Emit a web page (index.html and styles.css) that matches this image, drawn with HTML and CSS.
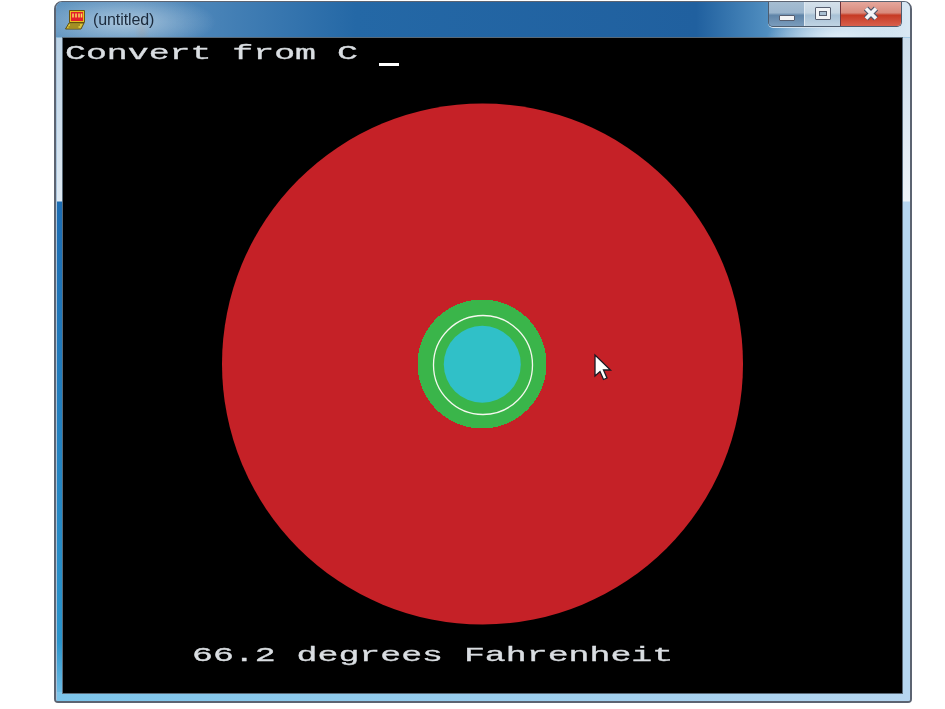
FILE: index.html
```html
<!DOCTYPE html>
<html lang="en">
<head>
<meta charset="utf-8">
<title>(untitled)</title>
<link rel="stylesheet" href="styles.css">
</head>
<body>
<main class="window">
  <div class="frame">
    <header class="titlebar">
      <svg class="app-icon" width="21" height="20" viewBox="0 0 21 20">
        <path d="M4.500.5h15v12h-15z" fill="#e8c020" stroke="#6a5410"/>
        <path d="M6 2h12v9H6z" fill="#e4202a"/>
        <path d="M8 3.500v4M11 3.500v4M14 3.500v4M16.500 3.500v4" stroke="#f8e060" stroke-width="1.500"/>
        <path d="M4 13h15l-3 6H.5z" fill="#dcc438" stroke="#5a4a10"/>
        <path d="M5 15h10M3.500 17h10" stroke="#6a5a10"/>
      </svg>
      <span class="title">(untitled)</span>
      <div class="controls">
        <div class="ctl ctl-min"><span class="min-glyph"></span></div>
        <div class="ctl ctl-max"><span class="max-glyph"></span></div>
        <div class="ctl ctl-close">
          <svg width="18" height="15" viewBox="0 0 18 15"><path d="M4 2.500l10 10M14 2.500l-10 10" stroke="#4c5468" stroke-width="6"/><path d="M4 2.500l10 10M14 2.500l-10 10" stroke="#f4f5f7" stroke-width="3.600"/></svg>
        </div>
      </div>
    </header>
    <section class="client">
      <svg class="scene" width="840" height="656" viewBox="0 0 840 656">
        <circle cx="419.500" cy="326" r="260.500" fill="#c52127"/>
        <circle cx="419" cy="326" r="64.500" fill="#3ab54a" shape-rendering="crispEdges"/>
        <circle cx="420" cy="327" r="49.500" fill="none" stroke="#f4f8ee" stroke-width="1.300"/>
        <circle cx="419.300" cy="326.300" r="38.500" fill="#30c0c8"/>
        <path d="M532 317v21l5-4.500 3.500 8 3.500-1.500-3.500-8h7z" fill="#fff" stroke="#1a1a24" stroke-width="1.300"/>
      </svg>
      <div class="line line-top">
        <span class="text">Convert from C</span>
        <span class="cursor"></span>
      </div>
      <div class="line line-bottom">
        <span class="text">66.2 degrees Fahrenheit</span>
      </div>
    </section>
  </div>
</main>
</body>
</html>
```
FILE: styles.css
```css
html, body {
  margin: 0;
  height: 100%;
  background: #fff;
  overflow: hidden;
}
body {
  padding: 1px 33px 6px 54px;
  box-sizing: border-box;
  height: 709px;
}
.window {
  height: 100%;
  box-sizing: border-box;
  border: 2px solid #5c6472;
  border-top-width: 1px;
  border-radius: 8px 8px 4px 4px;
  overflow: hidden;
  background: linear-gradient(to bottom, #b4cde2 0, #dfeaf3 199px, #1c6cb2 200px, #2a94cc 640px, #7cc4ea 702px);
}
.frame {
  height: 100%;
  display: flex;
  flex-direction: column;
  background:
    linear-gradient(to right, #7cc4ea, #b6d6f0) bottom / 100% 9px no-repeat,
    linear-gradient(to bottom, #c4d8e8 0, #eef4f9 199px, #b6d6f0 200px) right / 9px 100% no-repeat;
  box-shadow: inset 1px 0 #a9c3db;
}
.titlebar {
  height: 36px;
  flex: none;
  display: flex;
  align-items: flex-start;
  background:
    radial-gradient(ellipse 90px 28px at 70px 20px, rgba(205,222,235,.7), transparent),
    radial-gradient(ellipse 8px 18px at 86px 28px, rgba(120,120,125,.45), transparent),
    radial-gradient(ellipse 70px 30px at 780px 38px, rgba(230,242,250,.95), transparent),
    linear-gradient(to right, #5f93bf 0, #4a84b8 150px, #2468a6 300px, #20609f 640px, #4f8dbf 710px, #b6d2e8 790px, #d9e8f3 852px);
  box-sizing: border-box;
  border-bottom: 1px solid rgba(150,195,225,.8);
}
.app-icon {
  margin: 8px 0 0 9px;
}
.title {
  margin: 8px 0 0 7px;
  font: 16px/20px "Liberation Sans", Arial, sans-serif;
  letter-spacing: -.1px;
  color: #1b2a3c;
  filter: blur(.3px);
}
.controls {
  margin: 0 8px 0 auto;
  display: flex;
  height: 25px;
  box-sizing: border-box;
  border: 1px solid #4d5c6e;
  border-top: 0;
  border-radius: 0 0 5px 5px;
  box-shadow: 0 1px 0 #d6e4ef;
  overflow: hidden;
}
.ctl {
  display: flex;
  align-items: center;
  justify-content: center;
  box-sizing: border-box;
  height: 100%;
}
.ctl-min {
  width: 36px;
  border-right: 1px solid #dfe9f1;
  background: linear-gradient(to bottom, #a5bdd2 0, #9ab4cc 45%, #5f84a8 55%, #7a9cbc 100%);
}
.ctl-max {
  width: 36px;
  border-right: 1px solid #70323a;
  background: linear-gradient(to bottom, #d4e0ea 0, #c6d6e3 45%, #a8c1d6 55%, #c0d4e3 100%);
}
.ctl-close {
  width: 60px;
  background: linear-gradient(to bottom, #e6a79c 0, #d88a7c 45%, #c63a24 55%, #d8604c 100%);
}
.min-glyph {
  display: block;
  box-sizing: border-box;
  width: 16px;
  height: 6px;
  margin-top: 7px;
  background: #f2f3f5;
  border: 1px solid #565e70;
  border-radius: 1px;
}
.max-glyph {
  box-sizing: border-box;
  width: 16px;
  height: 13px;
  border: 1px solid #565e70;
  background: #f0f3f6;
  border-radius: 1px;
  margin-bottom: 2px;
  display: flex;
  align-items: center;
  justify-content: center;
}
.max-glyph::after {
  content: "";
  width: 8px;
  height: 5px;
  box-sizing: border-box;
  border: 1px solid #565e70;
  background: #a8bfd2;
}
.ctl-close svg {
  margin-bottom: 1px;
}
.client {
  position: relative;
  flex: 1;
  margin: 0 8px 8px 7px;
  background: #000;
  box-shadow: 0 0 0 1px #5a6a78;
  display: flex;
  flex-direction: column;
  justify-content: space-between;
  overflow: hidden;
}
.scene {
  position: absolute;
  inset: 0;
}
.line {
  position: relative;
  display: flex;
  align-items: flex-end;
  font: 400 21px/24px "Liberation Mono", "Courier New", monospace;
  -webkit-text-stroke: .35px #dadee2;
  color: #dadee2;
  white-space: pre;
}
.line-top {
  padding: 4px 0 0 2px;
}
.line-bottom {
  padding: 0 0 25px 129px;
}
.text {
  display: block;
  width: 176px;
  transform: scaleX(1.66);
  transform-origin: left center;
  filter: blur(.3px);
}
.line-top .text {
  width: 314px;
}
.cursor {
  width: 20px;
  height: 3px;
  background: #fff;
}
```
